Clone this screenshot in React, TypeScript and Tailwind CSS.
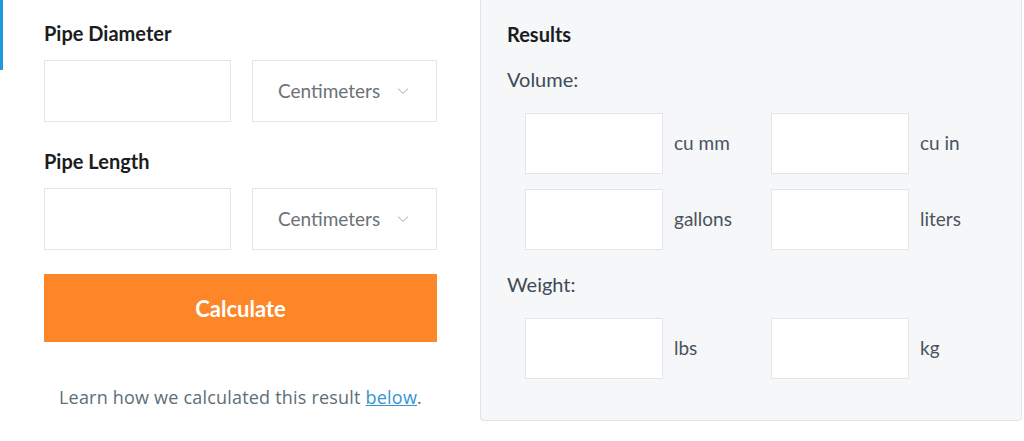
const font = { fontFamily: "Lato, 'Open Sans', sans-serif" };

const Chevron = () => (
  <svg width="12" height="8" viewBox="0 0 12 8" fill="none" className="text-[#c6cacd]">
    <path d="M1 1.5 6 6.5 11 1.5" stroke="currentColor" strokeWidth="1.1" />
  </svg>
);

const UnitSelect = () => (
  <div className="w-[185px] h-[62px] border border-[#e3e6e9] bg-white flex items-center pl-[25px] pr-[27px] justify-between">
    <span className="text-[19px] text-[#6c7278]">Centimeters</span>
    <Chevron />
  </div>
);

const InputRow = () => (
  <div className="flex gap-[21px]">
    <div className="w-[187px] h-[62px] border border-[#e3e6e9] bg-white" />
    <UnitSelect />
  </div>
);

const ResultCell = ({ unit }: { unit: string }) => (
  <div className="flex items-center gap-[11px]">
    <div className="w-[138px] h-[61px] border border-[#e3e6e9] bg-white" />
    <span className="text-[19px] text-[#4a545e]">{unit}</span>
  </div>
);

export default function App() {
  return (
    <div className="w-[1024px] h-[441px] bg-white flex overflow-hidden" style={font}>
      <div className="w-[3px] h-[70px] bg-[#1e9ad8] shrink-0" />
      <div className="w-[477px] shrink-0 pl-[41px] pt-[20px] flex flex-col">
        <h2 className="text-[20px] font-bold text-[#1a1d21] leading-[27px]">Pipe Diameter</h2>
        <div className="mt-[13px]">
          <InputRow />
        </div>
        <h2 className="mt-[26px] text-[20px] font-bold text-[#1a1d21] leading-[27px]">Pipe Length</h2>
        <div className="mt-[13px]">
          <InputRow />
        </div>
        <button className="mt-[24px] w-[393px] h-[68px] bg-[#fd8629] text-white text-[22px] font-bold">
          Calculate
        </button>
        <p
          className="mt-[42px] w-[393px] text-center text-[18px] tracking-[0.2px] text-[#5d6e78]"
          style={{ fontFamily: "'Open Sans', sans-serif" }}
        >
          Learn how we calculated this result{" "}
          <a href="#" className="text-[#3596d3] underline">below</a>.
        </p>
      </div>
      <div className="w-[542px] h-[421px] shrink-0 bg-[#f5f7f9] border border-t-0 border-[#e1e4e7] rounded-b-[4px] pl-[26px] pt-[21px] flex flex-col">
        <h2 className="text-[20px] font-bold text-[#1a1d21] leading-[27px]">Results</h2>
        <p className="mt-[19px] text-[20px] text-[#3e4a55] leading-[25px]">Volume:</p>
        <div className="mt-[21px] ml-[18px] grid grid-cols-[246px_auto] gap-y-[15px]">
          <ResultCell unit="cu mm" />
          <ResultCell unit="cu in" />
          <ResultCell unit="gallons" />
          <ResultCell unit="liters" />
        </div>
        <p className="mt-[22px] text-[20px] text-[#3e4a55] leading-[25px]">Weight:</p>
        <div className="mt-[21px] ml-[18px] grid grid-cols-[246px_auto]">
          <ResultCell unit="lbs" />
          <ResultCell unit="kg" />
        </div>
      </div>
    </div>
  );
}
